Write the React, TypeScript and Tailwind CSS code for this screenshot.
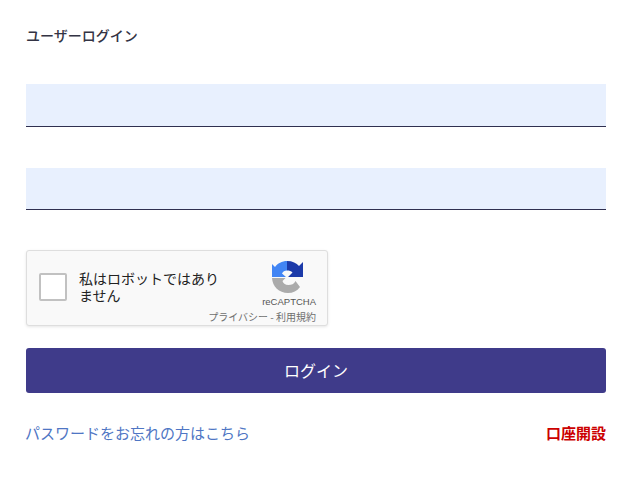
const jp = { fontFamily: '"Noto Sans CJK JP", "Noto Sans", sans-serif' }

function RecaptchaLogo() {
  return (
    <svg width="31" height="32" viewBox="0 0 62 64" aria-hidden="true">
      <path d="M0 34C1 51 14 64 32 64C42 64 50 60 56 52L47 40C44 46 39 48 33 48C26 48 22 44 21 40L27 34Z" fill="#ababab" />
      <path d="M30 0C41 0 49 4 54 10L62 2V32H32L41 23C38 20 35 19 30 19Z" fill="#1c3aa9" />
      <path d="M30 0C20 0 11 5 6 12L0 6V32H28L20 25C22 21 25 19 30 19Z" fill="#4285f4" />
    </svg>
  )
}

export default function App() {
  return (
    <div className="w-[632px] h-[478px] bg-white px-[26px] pt-[25px]" style={jp}>
      <h1 className="text-[14px] leading-5 font-medium text-[#333344]">ユーザーログイン</h1>

      <div className="mt-[39px] h-[43px] bg-[#e8f0fe] border-b border-[#2f3050]" />
      <div className="mt-[41px] h-[42px] bg-[#e8f0fe] border-b border-[#2f3050]" />

      <div className="mt-[40px] w-[302px] h-[76px] flex bg-[#f9f9f9] border border-[#dedede] rounded-[3px] shadow-[0_1px_3px_rgba(0,0,0,0.1)]">
        <div className="ml-3 mt-[22px] w-[28px] h-[28px] shrink-0 bg-white border-2 border-[#c1c1c1] rounded-[2px]" />
        <div className="ml-3 mt-[19px] w-[148px] shrink-0 text-[14px] leading-[17px] text-[#222222]">
          私はロボットではありません
        </div>
        <div className="flex-1 min-w-0 flex flex-col items-end pr-[11px] pt-[10px]">
          <div className="mr-[13px]">
            <RecaptchaLogo />
          </div>
          <div className="mt-[3px] text-[9.5px] leading-[11px] text-[#555555] font-['Liberation_Sans']">reCAPTCHA</div>
          <div className="mt-[4px] text-[10px] leading-[11px] text-[#6f6f6f] whitespace-nowrap">プライバシー - 利用規約</div>
        </div>
      </div>

      <button className="mt-[22px] w-full h-[45px] pb-[2px] bg-[#3f3b8a] rounded-[3px] text-white text-[16px]">ログイン</button>

      <div className="mt-[29px] flex items-center justify-between">
        <a className="-ml-px text-[15px] leading-[22px] text-[#4f76c4]">パスワードをお忘れの方はこちら</a>
        <a className="text-[15px] leading-[22px] font-bold text-[#cc0000]">口座開設</a>
      </div>
    </div>
  )
}
